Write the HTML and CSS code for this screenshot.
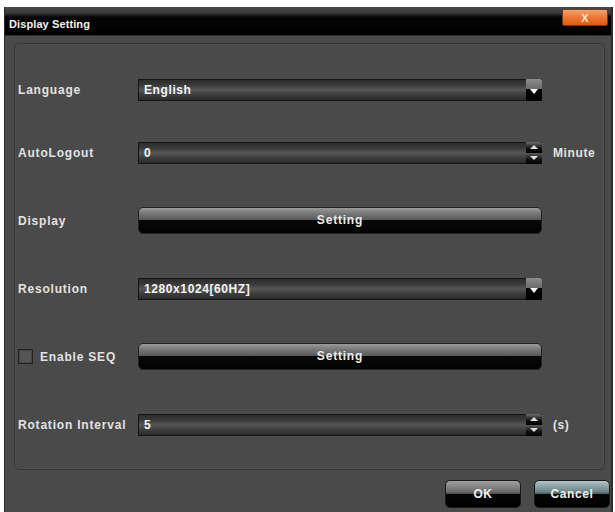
FILE: index.html
```html
<!DOCTYPE html>
<html>
<head>
<meta charset="utf-8">
<link rel="stylesheet" href="styles.css">
</head>
<body>
<div class="window">
  <div class="titlebar">
    <span class="title">Display Setting</span>
    <button class="close">X</button>
  </div>
  <div class="panel">
    <div class="row">
      <span class="label">Language</span>
      <div class="field">
        <span class="value">English</span>
        <span class="drop"><svg width="8" height="5" viewBox="0 0 8 5"><path d="M0 0h8L4 5z" fill="#fff"/></svg></span>
      </div>
    </div>
    <div class="row">
      <span class="label">AutoLogout</span>
      <div class="field">
        <span class="value">0</span>
        <span class="spin"><span class="up"><svg width="8" height="4" viewBox="0 0 8 4"><path d="M0 4h8L4 0z" fill="#ddd"/></svg></span><span class="down"><svg width="8" height="4" viewBox="0 0 8 4"><path d="M0 0h8L4 4z" fill="#ddd"/></svg></span></span>
      </div>
      <span class="unit">Minute</span>
    </div>
    <div class="row">
      <span class="label">Display</span>
      <button class="setting">Setting</button>
    </div>
    <div class="row">
      <span class="label">Resolution</span>
      <div class="field">
        <span class="value">1280x1024[60HZ]</span>
        <span class="drop"><svg width="8" height="5" viewBox="0 0 8 5"><path d="M0 0h8L4 5z" fill="#fff"/></svg></span>
      </div>
    </div>
    <div class="row">
      <span class="label check"><span class="box"></span>Enable SEQ</span>
      <button class="setting">Setting</button>
    </div>
    <div class="row">
      <span class="label">Rotation Interval</span>
      <div class="field">
        <span class="value">5</span>
        <span class="spin"><span class="up"><svg width="8" height="4" viewBox="0 0 8 4"><path d="M0 4h8L4 0z" fill="#ddd"/></svg></span><span class="down"><svg width="8" height="4" viewBox="0 0 8 4"><path d="M0 0h8L4 4z" fill="#ddd"/></svg></span></span>
      </div>
      <span class="unit">(s)</span>
    </div>
  </div>
  <div class="footer">
    <button class="btn">OK</button>
    <button class="btn">Cancel</button>
  </div>
</div>
</body>
</html>
```
FILE: styles.css
```css
html, body {
  margin: 0;
  padding: 0;
  background: #fff;
  width: 615px;
  height: 512px;
  overflow: hidden;
}
body {
  font-family: "Liberation Sans", Arial, sans-serif;
  font-weight: bold;
  font-size: 12px;
  color: #e6e6e6;
}
.window {
  margin: 7px 2px 0 4px;
  height: 505px;
  background: #4a4a4a;
  border-left: 1px solid #2a2a2a;
  border-right: 2px solid #2e2e2e;
  box-sizing: border-box;
}
.titlebar {
  height: 28px;
  display: flex;
  justify-content: space-between;
  align-items: flex-start;
  background: linear-gradient(#4a4a4a 0, #3a3a3a 6px, #050505 10px, #000 100%);
  border-bottom: 1px solid #2c2c2c;
  padding: 0 3px 0 4px;
}
.title {
  font-size: 11px;
  color: #f2f2f2;
  margin-top: 11px;
  letter-spacing: 0.1px;
}
.close {
  margin-top: 2px;
  width: 46px;
  height: 17px;
  border: 1px solid #7a3a10;
  border-radius: 2px;
  background: linear-gradient(#f6a070 0, #ee7a34 45%, #de5a14 100%);
  color: #ffe8d8;
  font: bold 11px "Liberation Sans", Arial, sans-serif;
  padding: 0;
  line-height: 14px;
}
.panel {
  margin: 7px 6px 0 9px;
  height: 427px;
  border: 1px solid #363636;
  box-shadow: inset 0 0 0 1px #505050;
  border-radius: 5px;
  box-sizing: border-box;
  padding: 32px 0 0 3px;
  display: flex;
  flex-direction: column;
  gap: 41px;
}
.row {
  height: 27px;
  display: flex;
  align-items: center;
}
.panel .row:nth-child(2) { margin-top: -5px; }
.label {
  width: 120px;
  flex: none;
  letter-spacing: 0.8px;
  color: #e2e2e2;
}
.check {
  display: flex;
  align-items: center;
}
.box {
  width: 13px;
  height: 13px;
  border: 1px solid #222;
  background: #555;
  box-shadow: inset 0 0 0 1px #444;
  margin-right: 7px;
}
.field {
  width: 404px;
  height: 22px;
  flex: none;
  box-sizing: border-box;
  border: 1px solid #151515;
  border-right: none;
  background: linear-gradient(#2c2c2c 0, #3a3a3a 25%, #575757 50%, #404040 70%, #2a2a2a 100%);
  display: flex;
  align-items: center;
  justify-content: space-between;
}
.value {
  padding-left: 5px;
  color: #f4f4f4;
  letter-spacing: 0.6px;
}
.drop {
  width: 16px;
  height: 22px;
  margin-top: -1px;
  margin-bottom: -1px;
  background: linear-gradient(#8c8c8c 0, #6c6c6c 45%, #050505 46%, #000 100%);
  border-radius: 0 2px 2px 0;
  display: flex;
  align-items: center;
  justify-content: center;
}
.drop svg { margin-top: 3px; }
.spin {
  width: 16px;
  height: 22px;
  margin-top: -1px;
  margin-bottom: -1px;
  display: flex;
  flex-direction: column;
}
.spin .up, .spin .down {
  flex: 1;
  display: flex;
  align-items: center;
  justify-content: center;
}
.spin .up { background: linear-gradient(#6a6a6a, #111 60%, #000); border-radius: 0 2px 0 0; }
.spin .down { background: linear-gradient(#5a5a5a, #111 60%, #000); border-radius: 0 0 2px 0; }
.unit {
  margin-left: 11px;
  letter-spacing: 0.6px;
  color: #e2e2e2;
}
.setting {
  width: 404px;
  height: 27px;
  flex: none;
  border: 1px solid #222;
  border-radius: 5px;
  background: linear-gradient(#9a9a9a 0, #7a7a7a 20%, #585858 48%, #080808 50%, #020202 100%);
  color: #ececec;
  font: bold 12px "Liberation Sans", Arial, sans-serif;
  letter-spacing: 0.8px;
  padding: 0;
  padding-bottom: 1px;
}
.footer {
  display: flex;
  justify-content: flex-end;
  gap: 13px;
  padding: 10px 1px 0 0;
}
.btn {
  width: 76px;
  height: 28px;
  border: 1px solid #1a1a1a;
  border-radius: 5px;
  background: linear-gradient(#a0a0a0 0, #6e6e6e 40%, #4a4a4a 50%, #050505 52%, #000 100%);
  color: #f0f0f0;
  font: bold 12px "Liberation Sans", Arial, sans-serif;
  letter-spacing: 0.6px;
  padding: 0;
}
.btn + .btn {
  background: linear-gradient(#b0c4c8 0, #6e8488 40%, #4a5a5c 50%, #050505 52%, #000 100%);
}
```
